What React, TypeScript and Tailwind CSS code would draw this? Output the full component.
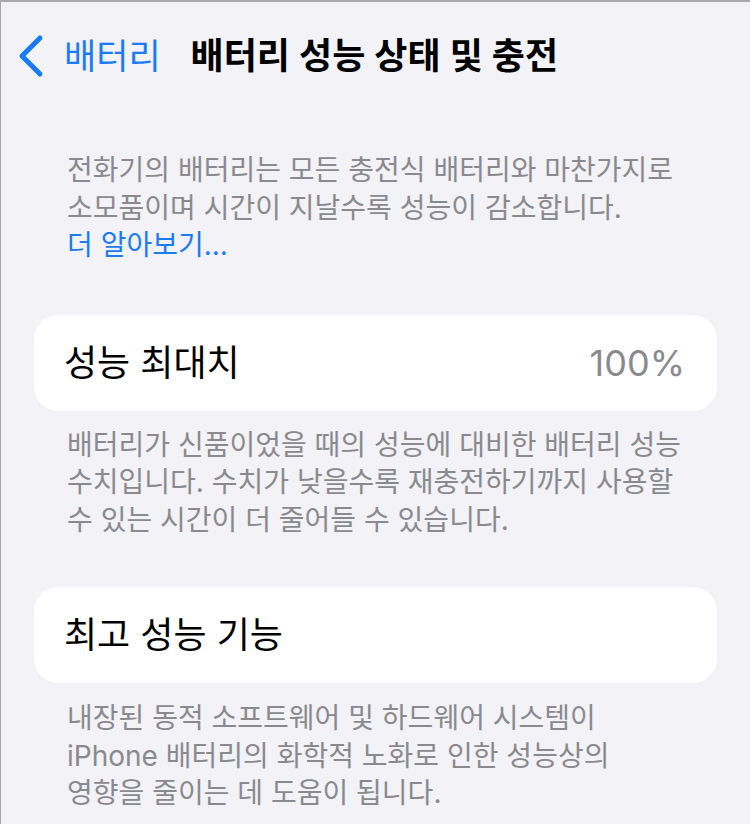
import React from 'react';

const FONT = '"Inter", "Noto Sans CJK KR", sans-serif';

const Footnote = ({ lines }: { lines: React.ReactNode[] }) => (
  <div className="px-[66px] text-[28px] leading-[37.5px] text-[#8a8a8e]">
    {lines.map((l, i) => (
      <div key={i} className="whitespace-nowrap">
        {l}
      </div>
    ))}
  </div>
);

const Card = ({ label, value }: { label: string; value?: string }) => (
  <div className="mx-[33px] flex h-[96px] items-center justify-between rounded-[24px] bg-white pl-[30px] pr-[32px]">
    <span className="text-[36px] text-black">{label}</span>
    {value && <span className="text-[36px] text-[#8a8a8e]">{value}</span>}
  </div>
);

export default function App() {
  return (
    <div
      className="h-[824px] w-full overflow-hidden border-l border-t-2 border-[#a9a9ad] bg-[#f2f2f7]"
      style={{ fontFamily: FONT }}
    >
      {/* Nav bar */}
      <div className="flex h-[108px] items-center">
        <div className="flex items-center pl-[17px] text-[#1a7cf5]">
          <svg width="28" height="44" viewBox="0 0 28 44" fill="none">
            <path
              d="M22 4 L4 22 L22 40"
              stroke="#1a7cf5"
              strokeWidth="5"
              strokeLinecap="round"
              strokeLinejoin="round"
            />
          </svg>
          <span className="ml-[18px] text-[35px]">배터리</span>
        </div>
        <h1 className="ml-[30px] text-[36px] font-semibold text-black">배터리 성능 상태 및 충전</h1>
      </div>

      <div className="mt-[42px]">
        <Footnote
          lines={[
            '전화기의 배터리는 모든 충전식 배터리와 마찬가지로',
            '소모품이며 시간이 지날수록 성능이 감소합니다.',
            <span className="text-[#1a7cf5]">더 알아보기...</span>,
          ]}
        />
      </div>

      <div className="mt-[50px]">
        <Card label="성능 최대치" value="100%" />
      </div>

      <div className="mt-[16px]">
        <Footnote
          lines={[
            '배터리가 신품이었을 때의 성능에 대비한 배터리 성능',
            '수치입니다. 수치가 낮을수록 재충전하기까지 사용할',
            '수 있는 시간이 더 줄어들 수 있습니다.',
          ]}
        />
      </div>

      <div className="mt-[48px]">
        <Card label="최고 성능 기능" />
      </div>

      <div className="mt-[17px]">
        <Footnote
          lines={[
            '내장된 동적 소프트웨어 및 하드웨어 시스템이',
            'iPhone 배터리의 화학적 노화로 인한 성능상의',
            '영향을 줄이는 데 도움이 됩니다.',
          ]}
        />
      </div>
    </div>
  );
}
